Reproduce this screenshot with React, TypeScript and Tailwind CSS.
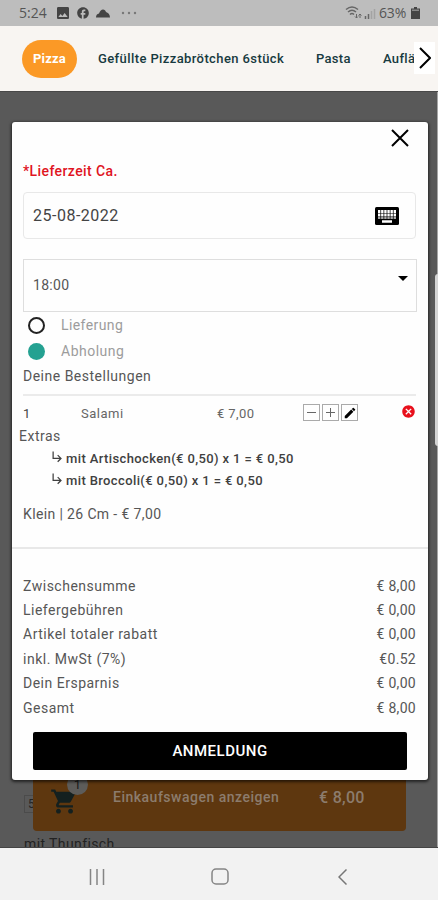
import { MdCancel, MdEdit, MdFacebook, MdImage, MdShoppingCart, MdSubdirectoryArrowRight } from 'react-icons/md'

const EXTRAS = [
  'mit Artischocken(€ 0,50) x 1 = € 0,50',
  'mit Broccoli(€ 0,50) x 1 = € 0,50',
]

const TOTALS = [
  { label: 'Zwischensumme', value: '€ 8,00' },
  { label: 'Liefergebühren', value: '€ 0,00' },
  { label: 'Artikel totaler rabatt', value: '€ 0,00' },
  { label: 'inkl. MwSt (7%)', value: '€0.52' },
  { label: 'Dein Ersparnis', value: '€ 0,00' },
  { label: 'Gesamt', value: '€ 8,00' },
]

function StatusBar() {
  return (
    <div className="flex h-[26px] shrink-0 items-center bg-[#bdbdbd] pl-[19px] pr-[18px] text-[#555]">
      <span className="w-[36px] font-['Open_Sans'] text-[14px] leading-none">5:24</span>
      <MdImage className="size-[16px] text-[#444]" />
      <MdFacebook className="ml-[5px] size-[14px] text-[#444]" />
      <svg viewBox="0 0 14 9" className="ml-[6px] h-[9px] w-[14px] fill-[#444]">
        <path d="M0 8.500C0 6 1 5 3 4.500 4 2 5.500 .5 7 .5s2.500 1 3 2.500c2 .5 4 2.500 4 5.500z" />
      </svg>
      <svg viewBox="0 0 16 4" className="ml-[11px] h-[4px] w-[16px] fill-[#777]">
        <circle cx="2" cy="2" r="1.200" />
        <circle cx="8" cy="2" r="1.200" />
        <circle cx="14" cy="2" r="1.200" />
      </svg>
      <div className="ml-auto flex items-center">
        <svg viewBox="0 0 34 16" className="h-[16px] w-[34px] fill-none stroke-[#666]">
          <path d="M1 4.500q6-5 12 0M3 7q4-3.500 8 0M5 9.500q2-2 4 0" strokeWidth="1.500" />
          <path d="M11.500 9v4m-1.500-1.500l1.500 1.500 1.500-1.500M15 13V9m-1.500 1.500L15 9l1.500 1.500" strokeWidth="1" />
          <path d="M20.500 14v-3M23.500 14V9" strokeWidth="1.500" />
          <path d="M26.500 14V6M29.500 14V4" strokeWidth="1.500" stroke="#a3a3a3" />
        </svg>
        <span className="font-['Open_Sans'] text-[14px] leading-none tracking-[-0.2px]">63%</span>
        <svg viewBox="0 0 9 12" className="ml-[5px] h-[12px] w-[9px] fill-[#444]">
          <path d="M3 0h3v1.500h3V12H0V1.500h3z" />
          <path d="M1 2.500h7V4H1z" fill="#888" />
        </svg>
      </div>
    </div>
  )
}

function CategoryBar() {
  return (
    <div className="relative flex h-[65px] shrink-0 items-center overflow-hidden whitespace-nowrap bg-[#f8f5f2] pl-[22px] text-[13px] font-medium text-[#173a40]">
      <span className="flex h-[38px] w-[55px] shrink-0 items-center justify-center rounded-full bg-[#fb9926] font-bold tracking-[0.2px] text-white">
        Pizza
      </span>
      <span className="ml-[21px] w-[218px] shrink-0 tracking-[0.4px]">Gefüllte Pizzabrötchen 6stück</span>
      <span className="w-[67px] shrink-0 tracking-[0.3px]">Pasta</span>
      <span className="shrink-0 tracking-[0.3px]">Auflä</span>
      <div className="absolute right-[3px] top-[16px] flex h-[32px] w-[21px] items-center justify-center bg-white">
        <svg viewBox="0 0 12 22" className="h-[22px] w-[12px] fill-none stroke-black" strokeWidth="2">
          <path d="M1 1l10 10L1 21" />
        </svg>
      </div>
    </div>
  )
}

function CartBar() {
  return (
    <div className="absolute left-[33px] top-[680px] flex h-[59px] w-[373px] rounded-[4px] bg-[#5e370f] text-[#8c7c6d]">
      <div className="relative ml-[17px] mt-[15px]">
        <MdShoppingCart className="size-[29px] text-[#14201f]" />
        <span className="absolute left-[17px] top-[-13px] flex size-[21px] items-center justify-center rounded-full bg-[#5d5c5a] text-[13px] text-[#1b1b1b]">
          1
        </span>
      </div>
      <span className="ml-[34px] mt-[15px] w-[206px] text-[14px] font-medium leading-[20px] tracking-[0.5px]">
        Einkaufswagen anzeigen
      </span>
      <span className="mt-[16px] text-[16px] font-medium leading-[20px] tracking-[0.3px]">€ 8,00</span>
    </div>
  )
}

function OrderRow() {
  return (
    <div className="flex h-[34px] items-center pl-[11px] pr-[12px] text-[13px] text-[#666]">
      <span className="w-[58px] pt-px text-[#444]">1</span>
      <span className="w-[136px] pt-px tracking-[0.5px]">Salami</span>
      <span className="w-[86px] pt-px tracking-[0.4px]">€ 7,00</span>
      <div className="mb-px flex gap-[2px]">
        <span className="flex size-[17px] items-center justify-center border border-[#aaa]">
          <svg viewBox="0 0 9 9" className="size-[9px] stroke-[#666]"><path d="M0 4.500h9" /></svg>
        </span>
        <span className="flex size-[17px] items-center justify-center border border-[#aaa]">
          <svg viewBox="0 0 9 9" className="size-[9px] stroke-[#666]"><path d="M0 4.500h9M4.500 0v9" /></svg>
        </span>
        <span className="flex size-[17px] items-center justify-center border border-[#aaa]">
          <MdEdit className="size-[14px] text-black" />
        </span>
      </div>
      <MdCancel className="mb-[3px] ml-auto size-[15px] text-[#e8101c]" />
    </div>
  )
}

function OrderDialog() {
  return (
    <div className="absolute left-[12px] top-[30px] flex h-[658px] w-[416px] flex-col rounded-[3px] bg-[#fefefe] text-[14px] text-[#565656] shadow-[0_1px_3px_1px_rgba(0,0,0,0.6)]">
      <div className="flex h-[32px] shrink-0 justify-end pr-[19px] pt-[7px]">
        <svg viewBox="0 0 18 18" className="size-[18px] stroke-black" strokeWidth="2">
          <path d="M1 1l16 16M17 1L1 17" />
        </svg>
      </div>
      <p className="h-[38px] pl-[11px] pt-[7px] leading-[20px] font-medium tracking-[0.4px] text-[#e0141f]">*Lieferzeit Ca.</p>

      <div className="ml-[11px] flex h-[47px] w-[393px] shrink-0 items-center justify-between rounded-[4px] border border-[#e8e8e8] pl-[9px] pr-[16px]">
        <span className="text-[16px] tracking-[0.5px] text-[#444]">25-08-2022</span>
        <svg viewBox="0 0 24 18" className="h-[18px] w-[24px]">
          <rect width="24" height="18" rx="1.500" />
          <path d="M3 4.500h18M3 8h18" stroke="#fff" strokeWidth="2.800" strokeDasharray="2.400 0.720" />
          <path d="M3 11h18" stroke="#ddd" strokeWidth="1.500" strokeDasharray="2.400 0.720" />
          <path d="M7 14.500h10" stroke="#fff" strokeWidth="2.500" />
        </svg>
      </div>
      <div className="ml-[11px] mt-[20px] flex h-[53px] w-[394px] shrink-0 items-center justify-between border border-[#dedede] pl-[9px] pr-[8px]">
        <span className="tracking-[0.3px]">18:00</span>
        <svg viewBox="0 0 10 5" className="mb-[15px] h-[5px] w-[10px]"><path d="M0 0h10L5 5z" /></svg>
      </div>

      <div className="flex h-[26px] items-center gap-[16px] pl-[16px] pt-px text-[#9c9c9c]">
        <span className="size-[17px] rounded-full border-2 border-[#222]" />
        <span className="tracking-[0.4px]">Lieferung</span>
      </div>
      <div className="flex h-[27px] items-center gap-[16px] pl-[16px] text-[#9c9c9c]">
        <span className="size-[17px] rounded-full bg-[#24a191]" />
        <span className="tracking-[0.5px]">Abholung</span>
      </div>
      <p className="ml-[11px] h-[31px] w-[393px] shrink-0 border-b-2 border-[#ebebeb] leading-[22px] tracking-[0.5px]">Deine Bestellungen</p>

      <OrderRow />
      <p className="h-[18px] pl-[7px] leading-[13px] tracking-[0.5px]">Extras</p>
      {EXTRAS.map(e => (
        <div key={e} className="flex h-[22px] items-center pl-[38px] text-[13px] font-medium text-[#404040]">
          <MdSubdirectoryArrowRight className="mb-[5px] mr-[1px] size-[15px]" />
          <span className="whitespace-nowrap tracking-[0.38px]">{e}</span>
        </div>
      ))}
      <p className="h-[57px] shrink-0 border-b-2 border-[#e8e8e8] pl-[11px] pt-[12px] leading-[20px] tracking-[0.37px]">
        Klein | 26 Cm - € 7,00
      </p>

      <div className="mt-[25px] pl-[11px] pr-[12px]">
        {TOTALS.map(t => (
          <div key={t.label} className="flex h-[24.4px] items-center justify-between">
            <span className="tracking-[0.5px]">{t.label}</span>
            <span className="tracking-[0.3px]">{t.value}</span>
          </div>
        ))}
      </div>
      <button className="mb-[10px] ml-[21px] mt-auto h-[38px] w-[374px] shrink-0 rounded-[2px] bg-black text-[15px] font-medium tracking-[0.5px] text-white">
        ANMELDUNG
      </button>
    </div>
  )
}

function NavigationBar() {
  return (
    <div className="flex h-[52px] shrink-0 items-center bg-[#f2f2f2] pl-[89px] pt-[5px]">
      <svg viewBox="0 0 16 16" className="size-[16px] stroke-[#858585]" strokeWidth="1.500">
        <path d="M1.500 0v16M8 0v16M14.500 0v16" />
      </svg>
      <svg viewBox="0 0 18 17" className="ml-[106px] h-[17px] w-[18px] fill-none stroke-[#858585]" strokeWidth="1.500">
        <rect x="1" y="1" width="16" height="15" rx="4" />
      </svg>
      <svg viewBox="0 0 9 16" className="ml-[109px] h-[16px] w-[9px] fill-none stroke-[#777]" strokeWidth="1.500">
        <path d="M8.500 .5L1 8l7.500 7.500" />
      </svg>
    </div>
  )
}

export default function App() {
  return (
    <main className="flex h-[900px] w-[438px] flex-col overflow-hidden font-['Roboto',sans-serif]">
      <StatusBar />
      <CategoryBar />
      <section className="relative flex-1 overflow-hidden border-b border-t border-b-[#444] border-t-[#484848] bg-[#595959]">
        <span className="absolute left-[25px] top-[25px] text-[15px] font-bold text-[#292929]">Tonno</span>
        <span className="absolute left-[24px] top-[703px] h-[18px] w-[40px] border border-[#4b4b4b] pl-[3px] text-[12px] leading-[16px] text-[#242424]">5</span>
        <span className="absolute left-[24px] top-[742px] text-[14px] tracking-[0.4px] text-[#222]">mit Thunfisch</span>
        <CartBar />
        <OrderDialog />
        <span className="absolute right-0 top-0 h-full w-px bg-[#a6a6a6]" />
        <span className="absolute right-[-3px] top-[182px] h-[172px] w-[6px] rounded-full bg-[#d4d4d4]" />
      </section>
      <NavigationBar />
    </main>
  )
}
